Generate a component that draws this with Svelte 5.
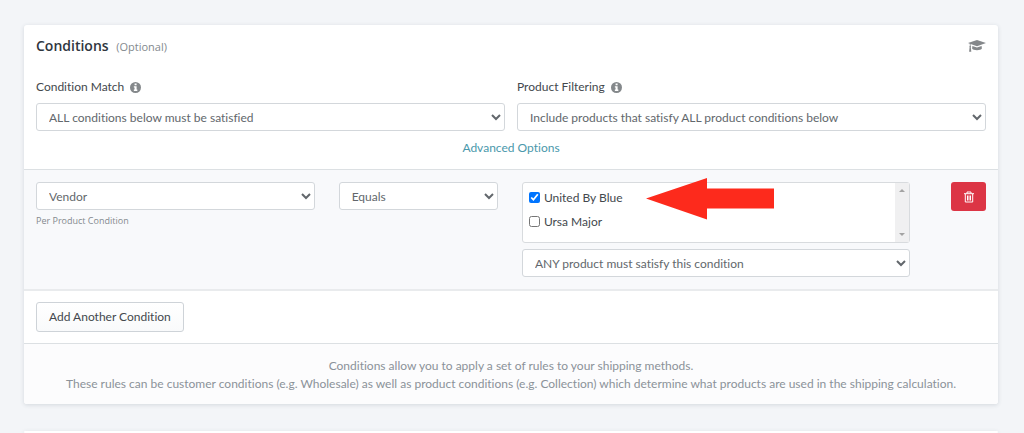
<script lang="ts">
  let match = 'all';
  let filtering = 'include-all';
  let field = 'vendor';
  let operator = 'equals';
  let scope = 'any';

  let vendors = [
    { name: 'United By Blue', checked: true },
    { name: 'Ursa Major', checked: false }
  ];
</script>

{#snippet info()}
  <svg class="info" viewBox="0 0 12 12" aria-hidden="true">
    <circle cx="6" cy="6" r="6" fill="#84888b" />
    <path d="M5 1.600h2.200v1.900H5zM4.200 4.600h3v3.700h.8v1.500H4.200V8.300H5V6h-.8z" fill="#fff" />
  </svg>
{/snippet}

<main>
  <div class="card stub previous"></div>

  <section class="card">
    <div class="settings">
      <header>
        <h2>Conditions <small>(Optional)</small></h2>
        <a class="guide" href="#guide" aria-label="Guide">
          <svg viewBox="0 0 18 14" aria-hidden="true">
            <path d="M9 1 18 4 9 7.2 2.6 5v1.9l.5.6-.3.8.5 4.4H1.1l.5-4.400-.3-.8.5-.6V4.700L0 4z" />
            <path d="M4.400 6.900 9 8.500l4.600-1.600.3 2.600c-.5 1-2.500 1.700-4.900 1.700s-4.400-.7-4.900-1.700z" />
          </svg>
        </a>
      </header>

      <div class="fields">
        <div>
          <label class="title" for="match">Condition Match {@render info()}</label>
          <select id="match" bind:value={match}>
            <option value="all">ALL conditions below must be satisfied</option>
          </select>
        </div>
        <div>
          <label class="title" for="filtering">Product Filtering {@render info()}</label>
          <select id="filtering" bind:value={filtering}>
            <option value="include-all">Include products that satisfy ALL product conditions below</option>
          </select>
        </div>
      </div>

      <a class="advanced" href="#advanced">Advanced Options</a>
    </div>

    <div class="condition">
      <div>
        <select aria-label="Field" bind:value={field}>
          <option value="vendor">Vendor</option>
        </select>
        <p class="hint">Per Product Condition</p>
      </div>
      <div>
        <select aria-label="Operator" bind:value={operator}>
          <option value="equals">Equals</option>
        </select>
      </div>
      <div class="values">
        <div class="list">
          <div class="options">
            {#each vendors as vendor}
              <label>
                <input type="checkbox" bind:checked={vendor.checked} />
                {vendor.name}
              </label>
            {/each}
          </div>
          <div class="scrollbar" aria-hidden="true">
            <span class="up"></span>
            <span class="down"></span>
          </div>
          <svg class="pointer" viewBox="0 0 128 42" aria-hidden="true">
            <path d="M0 20.500 61 0v10.500h67v20H61V41.500z" fill="#fd2a1c" />
          </svg>
        </div>
        <select aria-label="Product scope" bind:value={scope}>
          <option value="any">ANY product must satisfy this condition</option>
        </select>
      </div>
      <button class="remove" type="button" aria-label="Remove condition">
        <svg viewBox="0 0 10 12" aria-hidden="true">
          <path d="M3 2.500V1h4v1.500M0 2.700h10M1.300 3v8h7.400V3M3.500 4.500v5M5 4.500v5M6.500 4.500v5" fill="none" stroke="#fff" />
        </svg>
      </button>
    </div>

    <div class="actions">
      <button class="add" type="button">Add Another Condition</button>
    </div>

    <footer>
      <p>Conditions allow you to apply a set of rules to your shipping methods.</p>
      <p>These rules can be customer conditions (e.g. Wholesale) as well as product conditions (e.g. Collection) which determine what products are used in the shipping calculation.</p>
    </footer>
  </section>

  <div class="card stub"></div>
</main>

<style>
  :global(body) {
    margin: 0;
    background: #f3f5f8;
  }

  main {
    display: flex;
    flex-direction: column;
    gap: 27px;
    padding: 0 26px 0 24px;
    overflow: hidden;
    font: 12px/18px Lato, "Noto Sans", sans-serif;
    font-variant-ligatures: none;
    color: #43484d;
  }

  p,
  h2 {
    margin: 0;
  }

  .card {
    background: #fff;
    border-radius: 3px;
    box-shadow: 0 1px 4px rgba(50, 70, 90, 0.16);
  }

  .stub {
    height: 2px;
  }

  .previous {
    height: 0;
    margin-bottom: -2px;
  }

  .settings {
    display: flex;
    flex-direction: column;
    padding: 11px 12px 12px;
    border-bottom: 1px solid #dce0e3;
  }

  header {
    display: flex;
    justify-content: space-between;
    align-items: center;
    height: 20px;
    margin-bottom: 22px;
  }

  h2,
  .hint {
    font-family: "Open Sans", "Noto Sans", sans-serif;
  }

  h2 {
    font-size: 14px;
    font-weight: 600;
    color: #2f3640;
  }

  small {
    margin-left: 4px;
    font-size: 11px;
    font-weight: 400;
    color: #84898e;
  }

  .guide svg {
    display: block;
    width: 18px;
    height: 14px;
    fill: #85888b;
  }

  .fields {
    display: grid;
    grid-template-columns: 1fr 1fr;
    gap: 12px;
  }

  .title {
    display: flex;
    align-items: center;
    gap: 6px;
    margin-bottom: 7px;
  }

  .info {
    width: 11px;
    height: 11px;
  }

  select {
    display: block;
    width: 100%;
    height: 28px;
    padding: 0 0 0 8px;
    border: 1px solid #d3d7db;
    border-radius: 3px;
    background: #fff;
    font: inherit;
    color: #62676c;
  }

  .advanced {
    align-self: center;
    margin-top: 8px;
    color: #4a98ab;
    text-decoration: none;
  }

  .condition {
    display: grid;
    grid-template-columns: minmax(0, 28fr) minmax(0, 16fr) minmax(0, 39fr) 52px;
    gap: 24px;
    padding: 12px;
    border-bottom: 2px solid #e9ebed;
    background: #f8f9fb;
  }

  .hint {
    margin-top: 2px;
    font-size: 9px;
    color: #84898e;
  }

  .values {
    display: flex;
    flex-direction: column;
    gap: 6px;
  }

  .list {
    position: relative;
    display: flex;
    height: 59px;
    border: 1px solid #d8dbde;
    border-radius: 3px;
    background: #fff;
  }

  .options {
    flex: 1;
    padding: 3px 6px;
  }

  .options label {
    display: flex;
    align-items: center;
    gap: 4px;
    height: 24px;
  }

  .options input {
    width: 11px;
    height: 11px;
    margin: 0 0 2px;
  }

  .scrollbar {
    display: flex;
    flex-direction: column;
    justify-content: space-between;
    align-items: center;
    width: 14px;
    padding: 6px 0;
    box-sizing: border-box;
    background: #f0f0f1;
  }

  .scrollbar span {
    border: 3px solid transparent;
  }

  .scrollbar .up {
    border-top: 0;
    border-bottom-color: #a3a3a3;
  }

  .scrollbar .down {
    border-bottom: 0;
    border-top-color: #a3a3a3;
  }

  /* callout drawn over the option list */
  .pointer {
    position: absolute;
    top: -5px;
    left: 123px;
    width: 128px;
    height: 42px;
  }

  .remove {
    display: flex;
    align-items: center;
    justify-content: center;
    justify-self: end;
    align-self: start;
    width: 35px;
    height: 29px;
    padding: 0;
    border: 0;
    border-radius: 3px;
    background: #dc3545;
  }

  .remove svg {
    width: 10px;
    height: 12px;
  }

  .actions {
    padding: 11px 12px;
    border-bottom: 1px solid #dce0e3;
  }

  .add {
    display: block;
    height: 30px;
    padding: 0 12px;
    border: 1px solid #ced3d8;
    border-radius: 3px;
    background: linear-gradient(#fff, #f9fafb);
    font: inherit;
    color: #43484d;
  }

  footer {
    padding: 13px 12px 11px;
    border-radius: 0 0 3px 3px;
    background: #fcfcfd;
    text-align: center;
    color: #8b9299;
  }
</style>
